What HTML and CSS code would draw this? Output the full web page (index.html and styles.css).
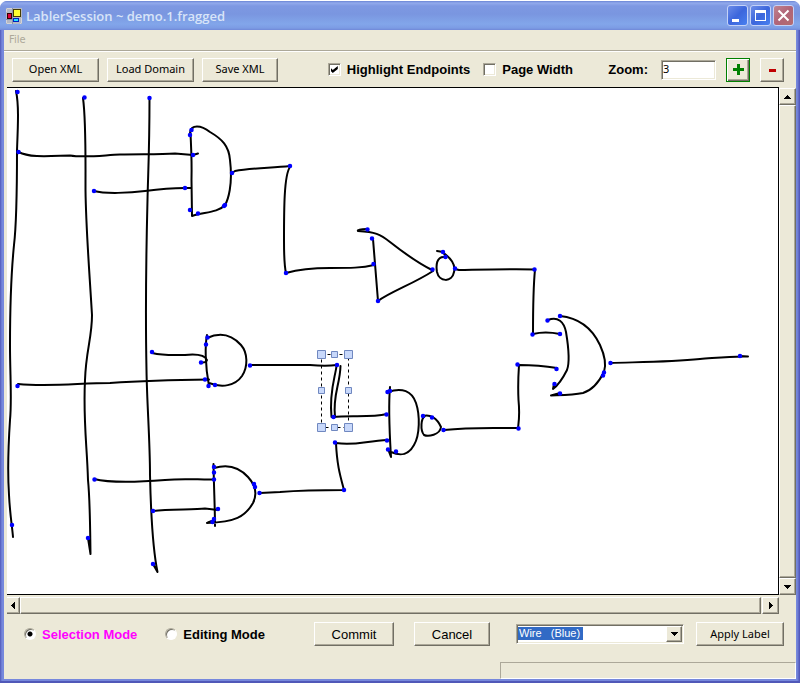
FILE: index.html
```html
<!DOCTYPE html>
<html lang="en">
<head>
<meta charset="utf-8">
<title>LablerSession ~ demo.1.fragged</title>
<link rel="stylesheet" href="styles.css">
</head>
<body>
<div class="window">
  <header class="titlebar">
    <svg class="app-icon" width="16" height="16" viewBox="0 0 16 16" aria-hidden="true">
      <path d="M0 0H16V16H0Z" fill="#b4b8c4"/>
      <path d="M.5 1V4M1 .5H6M.5 12V15M1 15.500H6M15.500 10V15M14 15.500H15" stroke="#d4d4d8"/>
      <path d="M6.500 0V16M0 11.500H7" stroke="#8890a8"/>
      <rect x="1.500" y="5.500" width="4" height="5" fill="#e0003c" stroke="#300"/>
      <rect x="7.500" y="1.500" width="7" height="7" fill="#ffff30" stroke="#443c00"/>
      <rect x="7.500" y="10.500" width="5" height="3" fill="#20e0ff" stroke="#0020c0"/>
    </svg>
    <h1 class="title">LablerSession ~ demo.1.fragged</h1>
    <div class="window-buttons">
      <button class="win-button" aria-label="Minimize"><svg width="19" height="19" viewBox="0 0 19 19"><path d="M4 13H11V16H4Z" fill="#fff"/></svg></button>
      <button class="win-button" aria-label="Maximize"><svg width="19" height="19" viewBox="0 0 19 19"><path d="M4 4H15V15H4ZM5 7V14H14V7Z" fill="#fff" fill-rule="evenodd"/></svg></button>
      <button class="win-button close" aria-label="Close"><svg width="19" height="19" viewBox="0 0 19 19"><path d="M4.500 4.500L14.500 14.500M14.500 4.500L4.500 14.500" stroke="#fff" stroke-width="2"/></svg></button>
    </div>
  </header>

  <nav class="menubar"><button class="menu-item" disabled>File</button></nav>

  <div class="toolbar">
    <div class="file-actions">
      <button class="button wide">Open XML</button>
      <button class="button wide">Load Domain</button>
      <button class="button">Save XML</button>
    </div>
    <label class="option"><input class="check" type="checkbox" checked>Highlight Endpoints</label>
    <label class="option page-width"><input class="check" type="checkbox">Page Width</label>
    <label class="option zoom">Zoom:<input class="zoom-value" type="text" value="3"></label>
    <button class="button square zoom-in" aria-label="Zoom in"><svg width="11" height="11" viewBox="0 0 11 11"><path d="M4 0H7V4H11V7H7V11H4V7H0V4H4Z" fill="#008000"/></svg></button>
    <button class="button square" aria-label="Zoom out"><svg width="11" height="11" viewBox="0 0 11 11"><path d="M2 5H9V8H2Z" fill="#c00000"/></svg></button>
  </div>

  <main class="workspace">
    <div class="canvas">
      <svg class="sketch" viewBox="7 88 771 506" preserveAspectRatio="xMinYMin meet" role="img" aria-label="Circuit sketch">
        <g class="ink">
          <path d="M16 91C19 105 18 125 17 150C17 190 17 220 14 245C11 275 10 310 10 345C10 375 12 400 10 420C8 450 8 480 9 495C10 515 12 525 13 537"/>
          <path d="M83 98C86 120 85.500 150 85.500 190C86 230 89 265 92 315C92 338 86 350 85 380C83 420 87 445 88 480C90 500 90 520 90.500 554L88 538"/>
          <path d="M149.500 98C149.500 150 148 175 147.500 200C146 260 145.500 320 146.500 370C147 405 150 440 150 475C151 520 153 550 157.500 572L153 564"/>
          <path d="M18.500 152C30 158 50 156 70 155.500C85 158 105 155 120 154.500C140 154 160 154.500 175 153.500L193 155L198 153.500"/>
          <path d="M94 191C105 194 130 193 145 191C160 189 170 188 185 188H191"/>
          <path d="M190 133C191 124 201 125 210 132C222 139 229 146 230 160C233 185 228 200 225 205C218 213 203 212 192 216L191.500 180C192 160 191 145 190.500 133"/>
          <path d="M232 173L235 171C250 168 270 168 290 166"/>
          <path d="M290 167C284 175 284 210 284 240C284 255 284 265 286 273C300 269 315 268 330 268C350 268 362 268 374 265"/>
          <path d="M373 239L378 301C390 292 415 283 433 271"/>
          <path d="M367 229C360 229 357 230 358 231C375 232 380 234 390 242C404 253 420 264 432 270"/>
          <path d="M437 251L443 252L446 257M445 257C436 256 436 266 437 272C439 282 452 283 454 272C456 265 450 258 445 254"/>
          <path d="M455 269L459 270C490 269.500 510 269 535 269.500C533 290 533 310 533 334Q545 331 560 334"/>
          <path d="M548 320C558 316 564 322 566 332C569 350 570 362 567 370C562 380 557 386 553 389L554 384"/>
          <path d="M560 316C580 318 592 328 600 345C605 356 606 366 604 372C600 380 593 390 583 393C573 395 565 395 551 395.500L560 393"/>
          <path d="M610 363C640 362 670 362 700 359C715 358 730 356 748 356.500L740 356"/>
          <path d="M557 368C545 366 530 365 519 365C518 380 518 390 518.500 400C520 415 519 420 518 428C490 428 470 427 444 430"/>
          <path d="M152 353C165 356 175 355 185 355C195 354 205 355 207 360Q206 363 201 362.500"/>
          <path d="M18 384C50 387 80 383 110 383C140 381 170 380 209 379.500"/>
          <path d="M207 335C205 345 205 365 209 386M207 338C220 332 232 335 241 345C248 353 248 367 242 376C235 386 222 388 209 383"/>
          <path d="M250 365H310C320 366 330 366 337 365"/>
          <path d="M94 479C110 483 140 482 165 480C185 478 200 480 214 479.500"/>
          <path d="M153 511C170 509 195 510 205 508.500L218 510"/>
          <path d="M213.500 464C214 490 215 510 215 526M214 468C230 463 240 468 248 477C257 487 257 495 253 503C245 517 235 522 207 523L214 520"/>
          <path d="M260 493L280 492C305 490 320 490 344 490C340 475 337 465 336 443C355 446 365 441 388 440"/>
          <path d="M336.500 366C335 378 329 392 331.500 417M340.500 366C340 385 332.500 395 335 417"/>
          <path d="M333 417C350 415 370 418 387 414"/>
          <path d="M390 387C388 410 390 440 391 457L388 449M388 392C402 387 412 391 416 403C420 415 420 435 414 445C408 456 400 456 391 452"/>
          <path d="M423 416C430 414 437 418 441 427C440 435 428 437 424 435C420 430 421 418 425 416"/>
        </g>
        <g class="endpoints">
          <path d="M17.500 92h0M84.500 97.500h0M149.500 98h0M18.500 152h0M94 191h0M191.500 130h0M190 135h0M193 155h0M185 188h0M190 210h0M198 213.500h0M224 206h0M225 205h0M232 173h0M290 166h0M286 273h0M373.500 264h0M372 238.500h0M378 301h0M367.500 229.500h0M432.500 269.500h0M443 252h0M445.500 257h0M455 268.500h0M534.500 269.500h0M532.500 334.500h0M560 334h0M547.500 320.500h0M560 316h0M554.500 384h0M604 372.500h0M603 375.500h0M560 393.500h0M610.500 363h0M740 356h0M517.500 364.500h0M556.500 369h0M518.500 428.500h0M443.500 430h0"/>
          <path d="M152 352h0M207.500 337.500h0M206 344.500h0M201 362.500h0M205 379.500h0M208.500 386h0M215 385h0M250 365.500h0M17.500 386h0M12 525h0M88 538h0M153 564h0M214 467h0M214 472.500h0M214 479.500h0M94.500 479.500h0M153 511h0M218 509h0M214 519h0M212.500 522h0M254 484h0M255 487h0M259.500 493h0M337 365h0M333.500 417h0M335 442.500h0M344 490h0M387.500 392h0M390 391h0M386.500 414.500h0M387 440.500h0M388 449.500h0M396 451.500h0M423 416h0M432 417.500h0"/>
        </g>
        <g class="selection">
          <rect class="marquee" x="321.500" y="354.500" width="27" height="73"/>
          <path class="handle" d="M317.500 350.500h8v8h-8zM344.500 350.500h8v8h-8zM317.500 423.500h8v8h-8zM344.500 423.500h8v8h-8zM331.500 351.500h6v6h-6zM331.500 424.500h6v6h-6zM318.500 387.500h6v6h-6zM345.500 387.500h6v6h-6z"/>
        </g>
      </svg>
    </div>
    <div class="scrollbar vertical">
      <button class="button arrow" aria-label="Scroll up"><svg width="7" height="4" viewBox="0 0 7 4"><path d="M3 0H4V1H5V2H6V3H7V4H0V3H1V2H2V1H3Z"/></svg></button>
      <div class="button thumb"></div>
      <button class="button arrow" aria-label="Scroll down"><svg width="7" height="4" viewBox="0 0 7 4"><path d="M0 0H7V1H6V2H5V3H4V4H3V3H2V2H1V1H0Z"/></svg></button>
    </div>
    <div class="scrollbar horizontal">
      <button class="button arrow left" aria-label="Scroll left"><svg width="4" height="7" viewBox="0 0 4 7"><path d="M4 0V7H3V6H2V5H1V4H0V3H1V2H2V1H3V0Z"/></svg></button>
      <div class="button thumb"></div>
      <button class="button arrow" aria-label="Scroll right"><svg width="4" height="7" viewBox="0 0 4 7"><path d="M0 0V7H1V6H2V5H3V4H4V3H3V2H2V1H1V0Z"/></svg></button>
    </div>
  </main>

  <div class="modebar">
    <label class="option selected"><input class="radio" type="radio" name="mode" checked>Selection Mode</label>
    <label class="option editing"><input class="radio" type="radio" name="mode">Editing Mode</label>
    <button class="button large commit">Commit</button>
    <button class="button large cancel">Cancel</button>
    <div class="combo">
      <select class="combo-select" aria-label="Label"><option>Wire &nbsp;&nbsp;(Blue)</option></select>
      <span class="button combo-arrow"><svg width="7" height="4" viewBox="0 0 7 4"><path d="M0 0H7V1H6V2H5V3H4V4H3V3H2V2H1V1H0Z"/></svg></span>
    </div>
    <button class="button apply">Apply Label</button>
  </div>
  <footer class="statusbar"><div class="status-panel"></div></footer>
</div>
</body>
</html>
```
FILE: styles.css
```css
* { box-sizing: border-box; }

body {
  margin: 0;
  background: #fff;
  color: #000;
  font: 12px "Liberation Sans", sans-serif;
}

button, input, select { margin: 0; font: inherit; color: inherit; }
svg { display: block; }

.window {
  display: flex;
  flex-direction: column;
  min-height: 100vh;
  padding: 0 4px 4px;
  border-top: 1px solid #fff;
  border-radius: 8px 8px 0 0;
  background: linear-gradient(90deg, #5058b8 0, #7688dc 2px, #7688dc calc(100% - 3px), #4c50b4 100%);
  box-shadow: inset 0 -2px #5058b8;
}

.titlebar {
  display: flex;
  align-items: center;
  height: 29px;
  margin: 0 -4px;
  padding: 0 6px;
  border-radius: 7px 7px 0 0;
  background: linear-gradient(#6a84d4 0, #92aaec 2px, #7e98e2 5px, #7a96e0 13px, #82a6ea 23px, #7c9ce4 27px, #7088d8 100%);
}

.title {
  flex: 1;
  margin: 0 0 0 4px;
  color: #d8e4f8;
  font: 600 13px "Open Sans", sans-serif;
}

.window-buttons { display: flex; gap: 2px; }

.win-button {
  display: flex;
  width: 21px;
  height: 21px;
  padding: 0;
  border: 1px solid #c4d2f8;
  border-radius: 3px;
  background: linear-gradient(135deg, #6c8ce8, #3c66dc 50%, #4880f0);
}

.win-button.close { background: linear-gradient(135deg, #c08490, #b06478 50%, #b46c70); }

.menubar {
  height: 22px;
  padding: 2px 5px;
  border-bottom: 1px solid #fff;
  background: #ece9d8;
  box-shadow: inset 0 -1px #aca899;
}

.menu-item {
  padding: 0;
  border: 0;
  background: none;
  color: #aca899;
  font: 11px/14px "DejaVu Sans Condensed", sans-serif;
}

.toolbar {
  display: flex;
  align-items: center;
  height: 35px;
  padding: 0 12px 0 8px;
  background: #ece9d8;
}

.file-actions { display: flex; gap: 8px; margin-right: auto; }

.button {
  display: flex;
  align-items: center;
  justify-content: center;
  width: 76px;
  height: 24px;
  padding: 0 0 2px;
  border: 1px solid;
  border-color: #fff #716f64 #716f64 #fff;
  background: #ece9d8;
  box-shadow: inset -1px -1px #aca899;
  font: 11px "Noto Sans", sans-serif;
  white-space: nowrap;
}

.button.wide { width: 87px; }
.button.square { width: 24px; margin-left: 10px; padding: 0; }
.button.large { width: 80px; padding: 0; font: 13px "Liberation Sans", sans-serif; }

.button.zoom-in {
  border-color: #008000;
  box-shadow: inset 1px 1px #fff, inset -1px -1px #716f64, inset -2px -2px #aca899;
}

.option {
  display: flex;
  align-items: center;
  gap: 6px;
  font-size: 13px;
  font-weight: bold;
  white-space: nowrap;
}

.page-width { width: 93px; margin-left: 13px; }
.zoom { gap: 13px; margin-left: 32px; }

.check {
  appearance: none;
  width: 13px;
  height: 13px;
  border: 1px solid;
  border-color: #aca899 #fff #fff #aca899;
  background: #fff;
  box-shadow: inset 1px 1px #716f64, inset -1px -1px #ece9d8;
}

.check:checked::before {
  content: "";
  display: block;
  width: 7px;
  height: 7px;
  margin: 2px;
  background: #000;
  clip-path: polygon(0 28%, 28% 57%, 100% 0, 100% 43%, 28% 100%, 0 72%);
}

.zoom-value {
  width: 55px;
  height: 20px;
  padding: 0 1px 2px;
  border: 1px solid;
  border-color: #aca899 #fff #fff #aca899;
  background: #fff;
  box-shadow: inset 1px 1px #716f64, inset -1px -1px #ece9d8;
  font: 11px "Noto Sans", sans-serif;
}

.workspace {
  display: grid;
  flex: 1;
  grid-template-columns: 1fr 17px;
  grid-template-rows: 1fr 17px;
  row-gap: 2px;
  padding-left: 3px;
  background: #ece9d8;
}

.canvas {
  border: solid #000;
  border-width: 1px 1px 1px 0;
  background: #fff;
}

.sketch { width: 100%; }

.ink { fill: none; stroke: #000; stroke-width: 2; stroke-linecap: round; stroke-linejoin: round; }
.endpoints { fill: none; stroke: #00f; stroke-width: 4.5; stroke-linecap: round; }
.marquee { fill: none; stroke: #000; stroke-dasharray: 3 3; }
.handle { fill: #c8d8fa; stroke: #7088c0; }

.scrollbar { display: flex; }
.scrollbar .button { padding: 0; }
.scrollbar .arrow { flex: none; width: 17px; height: 17px; }
.vertical { flex-direction: column; padding-top: 1px; }
.vertical .thumb { flex: 1; width: 17px; }
.horizontal .thumb { flex: 1; height: 17px; margin-right: 1px; }
.horizontal .left { width: 13px; border-left: 0; }

.modebar {
  display: flex;
  align-items: center;
  height: 48px;
  padding: 0 12px 8px 20px;
  background: #ece9d8;
}

.selected { color: #f0f; }
.editing { margin-left: 28px; }

.radio {
  appearance: none;
  width: 12px;
  height: 12px;
  border: 1px solid;
  border-color: #aca899 #fff #fff #aca899;
  border-radius: 50%;
  background: #fff;
  box-shadow: inset 1px 1px #716f64;
}

.radio:checked { background: radial-gradient(circle, #000 2px, #fff 3px); }

.commit { margin-left: auto; }
.button.cancel { width: 76px; margin-left: 20px; }

.combo { position: relative; width: 168px; margin-left: 26px; }

.combo-select {
  appearance: none;
  display: block;
  width: 100%;
  height: 20px;
  padding: 0 20px 2px 2px;
  border: 1px solid;
  border-color: #aca899 #fff #fff #aca899;
  border-radius: 0;
  background: linear-gradient(#316ac5, #316ac5) 1px 2px / 65px 13px no-repeat #fff;
  box-shadow: inset 1px 1px #716f64, inset -1px -1px #ece9d8;
  color: #fff;
  font: 11px "Liberation Sans", sans-serif;
}

.button.combo-arrow {
  position: absolute;
  top: 2px;
  right: 2px;
  width: 16px;
  height: 16px;
  padding: 0;
  pointer-events: none;
}

.button.apply { width: 88px; margin-left: 12px; }

.statusbar {
  display: flex;
  justify-content: flex-end;
  height: 17px;
  background: #ece9d8;
}

.status-panel {
  width: 296px;
  border: 1px solid;
  border-color: #aca899 #fff #fff #aca899;
}
```
